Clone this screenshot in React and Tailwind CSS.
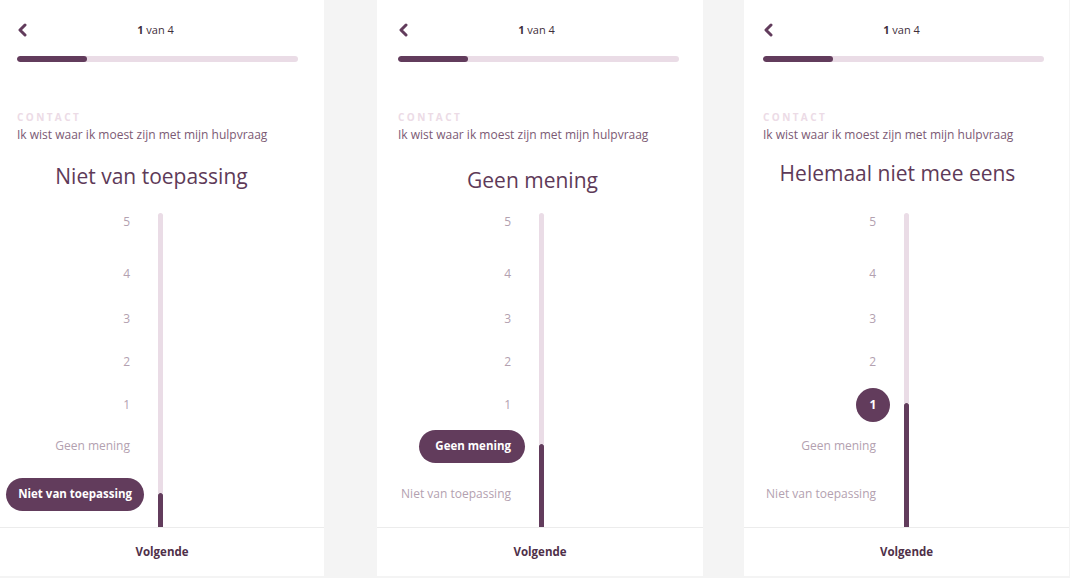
import React from "react";

const ITEMS = ["5", "4", "3", "2", "1", "Geen mening", "Niet van toepassing"];
const ROW_MT = ["mt-0", "mt-[18px]", "mt-[11px]", "mt-[9px]", "mt-[9px]", "mt-[7px]", "mt-[14px]"];

function Chevron() {
  return (
    <svg width="11" height="14" viewBox="0 0 11 14" fill="none">
      <polyline points="8,2 3,7 8,12" stroke="#623c5c" strokeWidth="3" strokeLinecap="round" strokeLinejoin="round" />
    </svg>
  );
}

function Label({ text, selected }) {
  if (!selected) {
    return <span className="whitespace-nowrap text-[12px] leading-none text-[#b3a1b0]">{text}</span>;
  }
  if (text.length === 1) {
    return (
      <span className="flex h-[34px] w-[34px] -mr-[14px] items-center justify-center rounded-full bg-[#623c5c] text-[12px] font-bold text-white">
        {text}
      </span>
    );
  }
  const pad = text === "Geen mening" ? "pl-[16px] pr-[14px]" : "px-[12px]";
  return (
    <span className={`flex h-[33px] -mr-[14px] items-center whitespace-nowrap rounded-full bg-[#623c5c] ${pad} text-[11.5px] font-bold text-white`}>
      {text}
    </span>
  );
}

function Panel({ widthCls, plCls, heading, headingPt, selected, fillH }) {
  return (
    <div className={`${widthCls} flex h-[576px] shrink-0 flex-col bg-white`}>
      <div className={`${plCls} flex flex-col`}>
        <div className="w-[281px]">
          <div className="mt-[22px] flex h-[16px] items-center">
            <div className="w-[20px]">
              <Chevron />
            </div>
            <div className="flex-1 pr-[24px] text-center text-[11px] text-[#3f2f3b]">
              <span className="font-bold">1</span> van 4
            </div>
          </div>
          <div className="mt-[18px] flex h-[6px] w-full overflow-hidden rounded-full bg-[#eadce6]">
            <div className="h-full w-[70px] rounded-full bg-[#623c5c]" />
          </div>
          <div className="mt-[49px] text-[10px] font-bold leading-[12px] tracking-[2.4px] text-[#ecdbe6]">CONTACT</div>
          <div className="mt-[4px] whitespace-nowrap text-[12px] leading-[16px] text-[#7b5a74]">
            Ik wist waar ik moest zijn met mijn hulpvraag
          </div>
          <div className={`h-[62px] ${headingPt}`}>
            <div className="whitespace-nowrap pr-[12px] text-center text-[21px] font-medium leading-[28px] text-[#5e3a58]">{heading}</div>
          </div>
        </div>
      </div>
      <div className={`${plCls} flex min-h-0 flex-1`}>
        <div className="flex w-[113px] flex-col items-end">
          {ITEMS.map((t, i) => (
            <div key={t} className={`${ROW_MT[i]} flex h-[34px] items-center justify-end`}>
              <Label text={t} selected={i === selected} />
            </div>
          ))}
        </div>
        <div className="ml-[28px] mt-[8px] flex w-[5px] flex-col">
          <div className="flex-1 rounded-t-full bg-[#eadce6]" />
          <div className="rounded-t-full bg-[#623c5c]" style={{ height: fillH }} />
        </div>
      </div>
      <div className="flex h-[49px] items-center justify-center border-t border-[#ececec] text-[11.5px] font-bold text-[#4f3049]">
        Volgende
      </div>
    </div>
  );
}

export default function App() {
  return (
    <div className="flex h-[578px] w-[1070px] items-start bg-[#f4f4f4] [font-family:'Open_Sans',sans-serif]">
      <Panel widthCls="w-[324px]" plCls="pl-[17px]" heading="Niet van toepassing" headingPt="pt-[19px]" selected={6} fillH={34} />
      <div className="w-[53px] shrink-0" />
      <Panel widthCls="w-[326px]" plCls="pl-[21px]" heading="Geen mening" headingPt="pt-[23px]" selected={5} fillH={83} />
      <div className="w-[41px] shrink-0" />
      <Panel widthCls="w-[325px]" plCls="pl-[19px]" heading="Helemaal niet mee eens" headingPt="pt-[16px]" selected={4} fillH={124} />
    </div>
  );
}
